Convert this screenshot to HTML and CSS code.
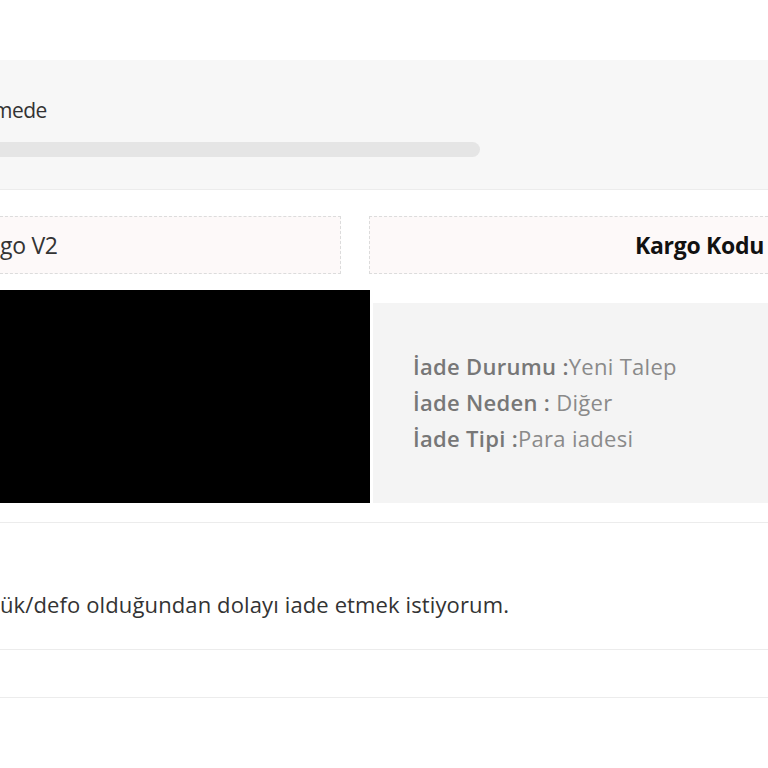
FILE: index.html
```html
<!DOCTYPE html>
<html lang="tr">
<head>
<meta charset="utf-8">
<link rel="stylesheet" href="styles.css">
</head>
<body>
<div class="page">
  <section class="status-panel">
    <div class="status-text">mede</div>
    <div class="bar"></div>
  </section>

  <section class="cargo-row">
    <div class="cargo-box cargo-left">go V2</div>
    <div class="cargo-box cargo-right">Kargo Kodu</div>
  </section>

  <section class="product-row">
    <div class="product-image"></div>
    <div class="product-info">
      <div class="info-line"><b>İade Durumu :</b>Yeni Talep</div>
      <div class="info-line"><b>İade Neden :</b> Diğer</div>
      <div class="info-line"><b>İade Tipi :</b>Para iadesi</div>
    </div>
  </section>

  <section class="note">
    <p class="note-text">ük/defo olduğundan dolayı iade etmek istiyorum.</p>
  </section>
  <section class="empty-row"></section>
</div>
</body>
</html>
```

FILE: styles.css
```css
html, body {
  margin: 0;
  padding: 0;
  background: #ffffff;
  overflow: hidden;
}

.page {
  width: 768px;
  font-family: "Open Sans", "Lato", sans-serif;
  color: #333333;
}

.status-panel {
  margin-top: 60px;
  height: 130px;
  box-sizing: border-box;
  background: #f7f7f7;
  border-bottom: 1px solid #ececec;
  padding-top: 36px;
}

.status-text {
  font-size: 21px;
  line-height: 28px;
  letter-spacing: -0.5px;
  text-indent: -7px;
  color: #333333;
}

.bar {
  margin-top: 18px;
  width: 480px;
  height: 15px;
  background: #e5e5e5;
  border-radius: 0 8px 8px 0;
}

.cargo-row {
  display: flex;
  gap: 28px;
  margin-top: 26px;
}

.cargo-box {
  height: 58px;
  box-sizing: border-box;
  background: #fdf9f9;
  border: 1px dashed #dcdcdc;
  display: flex;
  align-items: center;
  font-size: 23px;
  letter-spacing: -0.3px;
}

.cargo-left {
  width: 341px;
  border-left: none;
  color: #333333;
}

.cargo-right {
  flex: 1;
  border-right: none;
  padding-left: 265px;
  font-weight: 700;
  color: #111111;
  white-space: nowrap;
  overflow: hidden;
}

.product-row {
  display: flex;
  margin-top: 16px;
  height: 213px;
}

.product-image {
  width: 370px;
  height: 213px;
  background: #000000;
}

.product-info {
  flex: 1;
  margin-top: 13px;
  margin-left: 3px;
  background: #f4f4f4;
  padding: 45px 0 0 40px;
  box-sizing: border-box;
}

.info-line {
  font-size: 22px;
  line-height: 36px;
  letter-spacing: 0.3px;
  color: #8a8a8a;
  white-space: nowrap;
}

.info-line b {
  color: #777777;
  font-weight: 600;
}

.note {
  margin-top: 19px;
  border-top: 1px solid #ececec;
  border-bottom: 1px solid #ececec;
  height: 128px;
  display: flex;
  align-items: center;
  padding-top: 36px;
  box-sizing: border-box;
}

.note-text {
  margin: 0;
  font-size: 22px;
  letter-spacing: 0.12px;
  color: #333333;
}

.empty-row {
  height: 47px;
  border-bottom: 1px solid #ececec;
}
```
